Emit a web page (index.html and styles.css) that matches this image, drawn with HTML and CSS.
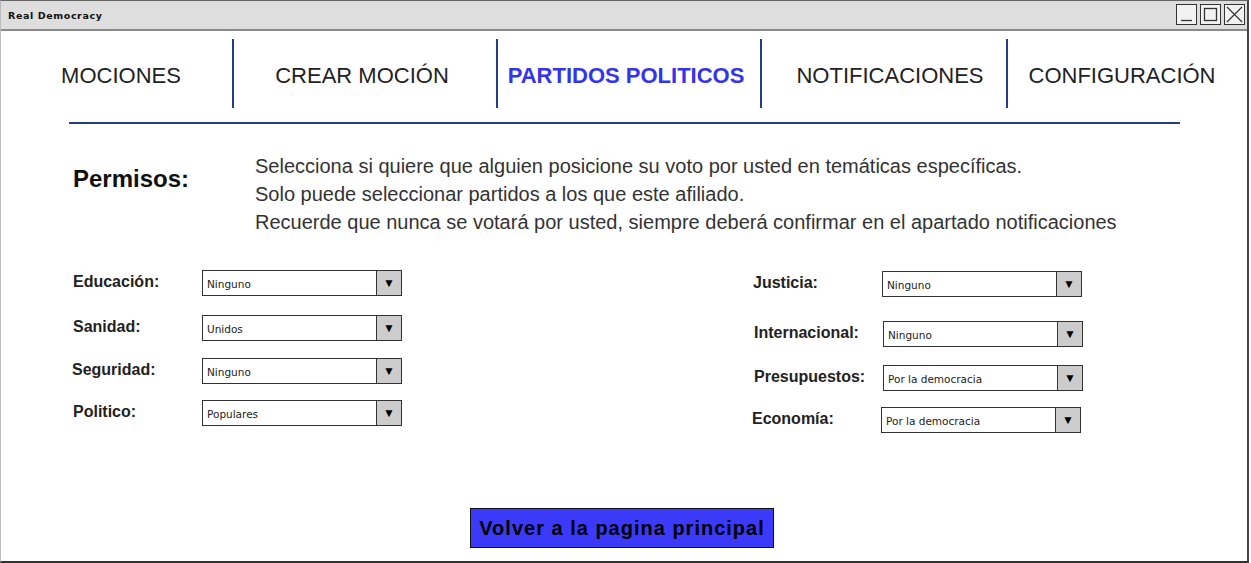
FILE: index.html
```html
<!DOCTYPE html>
<html lang="es">
<head>
<meta charset="utf-8">
<title>Real Democracy</title>
<link rel="stylesheet" href="styles.css">
</head>
<body>
<div class="window">
  <div class="titlebar">
    <span class="title">Real Democracy</span>
    <div class="controls">
      <span class="ctrl"><svg width="19" height="19" viewBox="0 0 19 19"><path d="M4 15.5 H15" stroke="#333" stroke-width="1.3" fill="none"/></svg></span>
      <span class="ctrl"><svg width="19" height="19" viewBox="0 0 19 19"><rect x="3.5" y="3.5" width="12" height="12" stroke="#333" stroke-width="1.3" fill="none"/></svg></span>
      <span class="ctrl"><svg width="19" height="19" viewBox="0 0 19 19"><path d="M2 2 L17 17 M17 2 L2 17" stroke="#333" stroke-width="1.2" fill="none"/></svg></span>
    </div>
  </div>
  <div class="content">
    <nav class="nav">
      <div class="tab t1">MOCIONES</div>
      <div class="tab t2">CREAR MOCIÓN</div>
      <div class="tab t3 active">PARTIDOS POLITICOS</div>
      <div class="tab t4">NOTIFICACIONES</div>
      <div class="tab t5">CONFIGURACIÓN</div>
    </nav>
    <div class="rule"></div>
    <section class="permisos">
      <h2 class="perm-title">Permisos:</h2>
      <div class="perm-text">
        <p>Selecciona si quiere que alguien posicione su voto por usted en temáticas específicas.</p>
        <p>Solo puede seleccionar partidos a los que este afiliado.</p>
        <p>Recuerde que nunca se votará por usted, siempre deberá confirmar en el apartado notificaciones</p>
      </div>
    </section>
    <section class="forms">
      <div class="col left">
        <div class="row"><label class="lbl">Educación:</label><div class="select"><span class="val">Ninguno</span><span class="arrow">▼</span></div></div>
        <div class="row"><label class="lbl">Sanidad:</label><div class="select"><span class="val">Unidos</span><span class="arrow">▼</span></div></div>
        <div class="row"><label class="lbl shift">Seguridad:</label><div class="select"><span class="val">Ninguno</span><span class="arrow">▼</span></div></div>
        <div class="row"><label class="lbl">Politico:</label><div class="select"><span class="val">Populares</span><span class="arrow">▼</span></div></div>
      </div>
      <div class="col right">
        <div class="row"><label class="lbl">Justicia:</label><div class="select"><span class="val">Ninguno</span><span class="arrow">▼</span></div></div>
        <div class="row"><label class="lbl">Internacional:</label><div class="select"><span class="val">Ninguno</span><span class="arrow">▼</span></div></div>
        <div class="row"><label class="lbl">Presupuestos:</label><div class="select"><span class="val">Por la democracia</span><span class="arrow">▼</span></div></div>
        <div class="row"><label class="lbl">Economía:</label><div class="select"><span class="val">Por la democracia</span><span class="arrow">▼</span></div></div>
      </div>
    </section>
    <div class="actions">
      <button class="btn">Volver a la pagina principal</button>
    </div>
  </div>
</div>
</body>
</html>
```

FILE: styles.css
```css
* { box-sizing: border-box; }
html, body { margin: 0; padding: 0; background: #fff; }
body { font-family: "Liberation Sans", Arial, sans-serif; color: #222; }

.window {
  width: 1249px;
  height: 563px;
  border-top: 1px solid #666;
  border-right: 2px solid #444;
  border-bottom: 2px solid #333;
  border-left: 1px solid #bbb;
  display: flex;
  flex-direction: column;
  overflow: hidden;
}

.titlebar {
  height: 30px;
  flex: none;
  background: #dedede;
  border-bottom: 2px solid #8a8a8a;
  display: flex;
  align-items: center;
  justify-content: space-between;
  padding: 0 2px 0 7px;
}
.title {
  font-family: "DejaVu Sans", sans-serif;
  font-weight: bold;
  font-size: 9.5px;
  letter-spacing: 0.6px;
  color: #111;
}
.controls { display: flex; gap: 3px; margin-top: -2px; }
.ctrl {
  width: 21px;
  height: 21px;
  border: 1px solid #333;
  background: #f2f2f2;
  display: flex;
  align-items: center;
  justify-content: center;
}
.ctrl svg { display: block; }

.content { flex: 1; display: flex; flex-direction: column; }

.nav {
  display: flex;
  margin-top: 8px;
  height: 69px;
  padding-left: 9px;
}
.tab {
  display: flex;
  align-items: center;
  justify-content: center;
  font-size: 22px;
  color: #222;
  padding-top: 4px;
}
.t1 { width: 222px; }
.t2 { width: 264px; border-left: 2px solid #233c8c; padding-right: 6px; }
.t3 { width: 264px; border-left: 2px solid #233c8c; padding-right: 6px; }
.t4 { width: 246px; border-left: 2px solid #233c8c; padding-left: 12px; }
.t5 { width: 240px; border-left: 2px solid #233c8c; padding-right: 10px; }
.active { color: #3333f0; font-weight: bold; font-size: 22px; }

.rule {
  height: 2px;
  background: #233c8c;
  margin: 14px 0 0 68px;
  width: 1111px;
}

.permisos {
  display: flex;
  padding-left: 72px;
  margin-top: 28px;
}
.perm-title {
  margin: 13px 0 0 0;
  width: 182px;
  font-size: 24px;
  font-weight: bold;
  color: #111;
  line-height: 28px;
}
.perm-text p {
  margin: 0;
  font-size: 20px;
  line-height: 28px;
  color: #333;
}

.forms {
  display: flex;
  margin-top: 34px;
}
.col { display: flex; flex-direction: column; }
.left { padding-left: 71px; width: 751px; }
.right { padding-left: 0; }
.row { display: flex; align-items: center; height: 26px; }
.lbl {
  font-size: 16px;
  font-weight: bold;
  color: #222;
  margin-top: -3px;
}
.left .lbl { width: 129px; margin-left: 1px; }
.right .lbl { width: 129px; margin-left: 1px; }
.left .lbl.shift { margin-left: 0; margin-right: 1px; }

.left .row:nth-child(2) { margin-top: 19px; }
.left .row:nth-child(3) { margin-top: 17px; }
.left .row:nth-child(4) { margin-top: 16px; }
.right .row:nth-child(1) { margin-top: 1px; }
.right .row:nth-child(2) { margin-top: 24px; }
.right .row:nth-child(3) { margin-top: 18px; }
.right .row:nth-child(4) { margin-top: 16px; }
.right .row:nth-child(4) .lbl { margin-left: 0; }
.right .row:nth-child(2) .lbl,
.right .row:nth-child(3) .lbl { margin-left: 2px; width: 129px; }

.select {
  width: 200px;
  height: 26px;
  border: 1px solid #333;
  display: flex;
  background: #fff;
}
.val {
  flex: 1;
  font-family: "DejaVu Sans", sans-serif;
  font-size: 10.5px;
  color: #222;
  display: flex;
  align-items: center;
  padding-left: 4px;
  padding-top: 2px;
}
.arrow {
  width: 25px;
  background: #cccccc;
  border-left: 1px solid #333;
  font-size: 12px;
  color: #000;
  display: flex;
  align-items: center;
  justify-content: center;
}

.actions {
  display: flex;
  justify-content: center;
  margin-top: 75px;
  padding-right: 4px;
}
.btn {
  width: 304px;
  height: 40px;
  background: #3a3af8;
  border: 1px solid #111;
  font-family: "Liberation Sans", Arial, sans-serif;
  font-weight: bold;
  font-size: 20px;
  letter-spacing: 1px;
  color: #000;
  padding: 0;
}
```
